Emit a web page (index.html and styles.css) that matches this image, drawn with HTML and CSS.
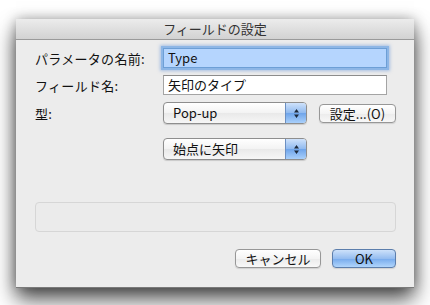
FILE: index.html
```html
<!DOCTYPE html>
<html lang="ja">
<head>
    <meta charset="UTF-8">
    <title>フィールドの設定</title>
    <link rel="stylesheet" href="styles.css">
</head>
<body>

    <div class="window">
        <div class="titlebar">フィールドの設定</div>
        <div class="content">
            <div class="row">
                <label class="label">パラメータの名前:</label>
                <div class="field focused"><span>Type</span></div>
            </div>
            <div class="row">
                <label class="label">フィールド名:</label>
                <div class="field">矢印のタイプ</div>
            </div>
            <div class="row">
                <label class="label">型:</label>
                <div class="popup">
                    <span class="popup-text">Pop-up</span>
                    <span class="popup-arrows">
                        <svg width="7" height="11" viewBox="0 0 7 11"><path d="M3.5 1 L6 4.5 L1 4.5 Z M3.5 10 L6 6.5 L1 6.5 Z" fill="#1d2a3c"/></svg>
                    </span>
                </div>
                <button class="btn settings">設定...(O)</button>
            </div>
            <div class="row second">
                <span class="label"></span>
                <div class="popup">
                    <span class="popup-text">始点に矢印</span>
                    <span class="popup-arrows">
                        <svg width="7" height="11" viewBox="0 0 7 11"><path d="M3.5 1 L6 4.5 L1 4.5 Z M3.5 10 L6 6.5 L1 6.5 Z" fill="#1d2a3c"/></svg>
                    </span>
                </div>
            </div>

            <div class="message-box"></div>

            <div class="buttons">
                <button class="btn cancel">キャンセル</button>
                <button class="btn ok">OK</button>
            </div>
        </div>
    </div>

</body>
</html>
```

FILE: styles.css
```css
html, body {
    margin: 0;
    background: #fff;
}

body {
    padding: 19px 0 18px 16px;
    min-height: 305px;
    box-sizing: border-box;
    font-family: "Noto Sans CJK JP", "DejaVu Sans", sans-serif;
    font-size: 13px;
    color: #111;
}

/* Dialog window */
.window {
    width: 398px;
    height: 268px;
    background: #ececec;
    box-shadow: 0 1px 0 #7a7a7a, 0 12px 20px rgba(0, 0, 0, 0.7), 0 0 12px rgba(0, 0, 0, 0.3);
    display: flex;
    flex-direction: column;
}

.titlebar {
    height: 20px;
    line-height: 20px;
    text-align: center;
    font-size: 13px;
    color: #333;
    background: linear-gradient(#ececec, #d2d2d2);
    border-bottom: 1px solid #9a9a9a;
}

.content {
    padding: 8px 18px 0 19px;
    display: flex;
    flex-direction: column;
}

.row {
    display: flex;
    align-items: center;
    margin-bottom: 7px;
}
.row.second { margin-top: 7px; }

.label {
    width: 128px;
    flex-shrink: 0;
    font-size: 13px;
    letter-spacing: 0.3px;
}

/* Text fields */
.field {
    width: 218px;
    height: 18px;
    line-height: 18px;
    padding-left: 4px;
    background: #fff;
    border: 1px solid #a4a4a4;
    border-top-color: #8c8c8c;
    font-size: 13px;
    white-space: nowrap;
}
.field.focused {
    background: #b5d5fe;
    border-color: #6d9fd6;
    box-shadow: 0 0 0 2px #8db6e6, 0 0 3px 3px rgba(100, 150, 220, 0.5);
}

/* Popup menus */
.popup {
    width: 142px;
    height: 20px;
    display: flex;
    border: 1px solid #8e8e8e;
    border-radius: 4px;
    background: linear-gradient(#ffffff, #f3f3f3 50%, #e9e9e9 51%, #f6f6f6);
    box-shadow: 0 1px 1px rgba(0, 0, 0, 0.15);
    overflow: hidden;
}
.popup-text {
    flex: 1;
    padding-left: 9px;
    line-height: 20px;
    font-size: 13px;
}
.popup-arrows {
    width: 20px;
    display: flex;
    align-items: center;
    justify-content: center;
    border-left: 1px solid #6b8fc2;
    background: linear-gradient(#cfe2fb, #8fb9ef 50%, #6ea4ea 51%, #a9d0fb);
}

/* Push buttons */
.btn {
    height: 19px;
    padding: 0;
    border: 1px solid #979797;
    border-radius: 4px;
    background: linear-gradient(#ffffff, #f4f4f4 50%, #ebebeb 51%, #f8f8f8);
    box-shadow: 0 1px 1px rgba(0, 0, 0, 0.12);
    font-family: "Noto Sans CJK JP", "DejaVu Sans", sans-serif;
    font-size: 13px;
    line-height: 17px;
    color: #111;
}
.btn.settings {
    width: 77px;
    margin-left: 12px;
}
.btn.cancel { width: 86px; }
.btn.ok {
    width: 64px;
    border-color: #5c7eac;
    background: linear-gradient(#cde1fa, #95bdf0 50%, #76aaec 51%, #b0d5fc);
}

.message-box {
    margin-top: 35px;
    height: 28px;
    border: 1px solid #d6d6d6;
    border-radius: 4px;
    background: #ebebeb;
}

.buttons {
    display: flex;
    justify-content: flex-end;
    gap: 11px;
    margin-top: 17px;
}
```
